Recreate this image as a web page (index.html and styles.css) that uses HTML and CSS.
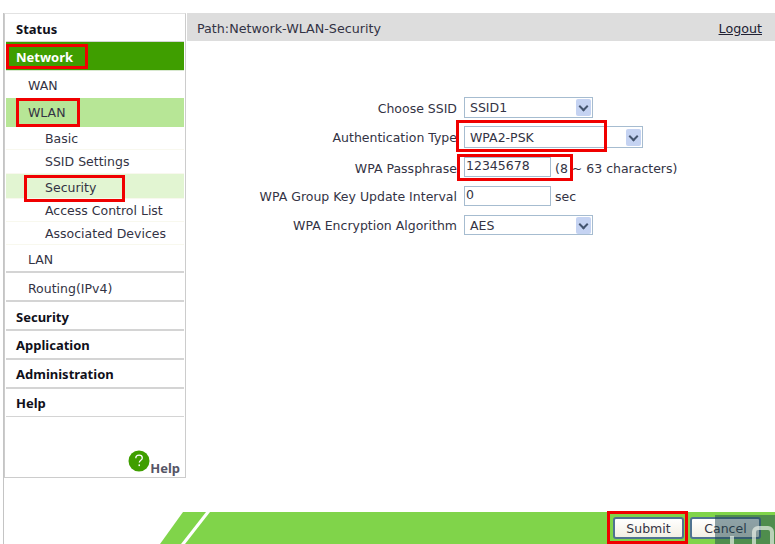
FILE: index.html
```html
<!DOCTYPE html>
<html lang="en">
<head>
    <meta charset="UTF-8">
    <meta name="viewport" content="width=device-width, initial-scale=1.0">
    <title>Network - WLAN - Security</title>
    <link rel="stylesheet" href="styles.css">
</head>
<body>
    <div class="page">
        <div class="top">
            <div class="sidebar">
                <ul class="menu">
                    <li class="item level1 first">Status</li>
                    <li class="item level1 active">Network</li>
                    <li class="item level2">WAN</li>
                    <li class="item level2 current">WLAN</li>
                    <li class="item level3">Basic</li>
                    <li class="item level3 second">SSID Settings</li>
                    <li class="item level3 selected">Security</li>
                    <li class="item level3">Access Control List</li>
                    <li class="item level3">Associated Devices</li>
                    <li class="item level2 lined lan">LAN</li>
                    <li class="item level2 lined routing">Routing(IPv4)</li>
                    <li class="item level1 security">Security</li>
                    <li class="item level1">Application</li>
                    <li class="item level1">Administration</li>
                    <li class="item level1 last">Help</li>
                </ul>
                <div class="help-link">
                    <svg class="help-icon" width="22" height="22" viewBox="0 0 22 22">
                        <circle cx="11" cy="11" r="10.5" fill="#3f9e00"/>
                        <path d="M7.8 8.2c0-2 1.4-3.1 3.3-3.1s3.2 1.1 3.2 2.8c0 2.4-3 2.3-3 4.7" fill="none" stroke="#fff" stroke-width="1.3"/>
                        <rect x="10.5" y="14.4" width="1.5" height="1.7" fill="#fff"/>
                    </svg>
                    <span>Help</span>
                </div>
            </div>
            <div class="content">
                <div class="pathbar">
                    <span>Path:Network-WLAN-Security</span>
                    <a class="logout" href="#">Logout</a>
                </div>
                <div class="form">
                    <div class="row row-ssid">
                        <label>Choose SSID</label>
                        <div class="fake-select short"><span>SSID1</span><i class="arrow"></i></div>
                    </div>
                    <div class="row row-auth">
                        <label>Authentication Type</label>
                        <div class="fake-select long"><span>WPA2-PSK</span><i class="arrow"></i></div>
                    </div>
                    <div class="row row-pass">
                        <label>WPA Passphrase</label>
                        <div class="field">12345678</div>
                        <span class="note">(8 ~ 63 characters)</span>
                    </div>
                    <div class="row row-interval">
                        <label>WPA Group Key Update Interval</label>
                        <div class="field">0</div>
                        <span class="note">sec</span>
                    </div>
                    <div class="row row-algo">
                        <label>WPA Encryption Algorithm</label>
                        <div class="fake-select short"><span>AES</span><i class="arrow"></i></div>
                    </div>
                </div>
            </div>
        </div>
        <div class="footer">
            <svg class="footer-bg" width="615" height="32" viewBox="0 0 615 32">
                <polygon points="23,0 46,0 21,32 0,32" fill="#80d44a"/>
                <polygon points="50,0 615,0 615,32 25,32" fill="#80d44a"/>
            </svg>
            <div class="buttons">
                <button class="btn" type="button">Submit</button>
                <button class="btn" type="button">Cancel</button>
            </div>
        </div>
    </div>

    <!-- red marks drawn over the screenshot -->
    <div class="mark mark-network"></div>
    <div class="mark mark-wlan"></div>
    <div class="mark mark-security"></div>
    <div class="mark mark-auth"></div>
    <div class="mark mark-pass"></div>
    <div class="mark mark-submit"></div>

    <div class="watermark">
        <svg width="60" height="29" viewBox="0 0 60 29">
            <path d="M39 29V17a4 4 0 0 1 4-4h10a4 4 0 0 1 4 4v12M17 29v-8" fill="none" stroke="#e8efe6" stroke-width="4" opacity="0.7"/>
        </svg>
    </div>
</body>
</html>
```

FILE: styles.css
```css
html, body {
    margin: 0;
    padding: 0;
}
body {
    width: 775px;
    height: 544px;
    overflow: hidden;
    position: relative;
    background-color: white;
    font-family: "DejaVu Sans", sans-serif;
    font-size: 12.5px;
    color: #333344;
}
.page {
    height: 531px;
    margin: 13px 0 0 3px;
    border-left: 1px solid #c4c4c4;
    display: flex;
    flex-direction: column;
}
.top {
    display: flex;
}
.sidebar {
    width: 182px;
    height: 465px;
    box-sizing: border-box;
    border: 1px solid #cccccc;
    border-top: 1px solid #e2e2e2;
    padding: 0 1px;
    display: flex;
    flex-direction: column;
}
.menu {
    list-style: none;
    margin: 0;
    padding: 0;
}
.item {
    box-sizing: border-box;
    height: 29px;
    line-height: 29px;
    padding-left: 10px;
    border-bottom: 2px solid #d4d4d4;
}
.level1 {
    font-family: "Noto Sans", sans-serif;
    font-size: 13px;
    font-weight: bold;
    color: #10101a;
}
.first {
    height: 28px;
    line-height: 30px;
    border-bottom-width: 1px;
}
.last {
    height: 28px;
    border-bottom-width: 1px;
}
.security {
    line-height: 30px;
}
.active {
    background-color: #3f9e00;
    color: white;
    line-height: 30px;
    border-bottom: 1px solid #d8e8d0;
}
.level2 {
    padding-left: 22px;
    border-bottom: 0;
    height: 27px;
    line-height: 29px;
}
.lined {
    border-bottom: 2px solid #d4d4d4;
    height: 29px;
}
.lan {
    height: 28px;
}
.routing {
    line-height: 31px;
}
.current {
    background-color: #b7e696;
    height: 29px;
    line-height: 30px;
}
.level3 {
    padding-left: 39px;
    height: 23px;
    line-height: 23px;
    border-bottom: 1px solid #f8f8ee;
}
.second {
    height: 24px;
}
.selected {
    background-color: #e2f5d2;
    height: 25px;
    line-height: 27px;
}
.help-link {
    margin-top: auto;
    display: flex;
    justify-content: flex-end;
    align-items: flex-end;
    padding: 0 4px 0 0;
    font-family: "Noto Sans", sans-serif;
    font-size: 13px;
    font-weight: bold;
    color: #555566;
}
.help-icon {
    margin-bottom: 5px;
}
.content {
    flex: 1;
}
.pathbar {
    height: 28px;
    margin-left: 1px;
    background-color: #dddddd;
    display: flex;
    justify-content: space-between;
    align-items: center;
    padding: 3px 13px 0 10px;
    box-sizing: border-box;
    font-size: 12.7px;
}
.logout {
    color: #222233;
}
.form {
    padding-top: 56px;
}
.row {
    display: flex;
    align-items: center;
}
.row label {
    width: 271px;
    text-align: right;
    margin-right: 7px;
}
.row-ssid {
    height: 21px;
    margin-bottom: 8px;
}
.row-ssid label {
    padding-top: 2px;
}
.row-auth {
    height: 22px;
    margin-bottom: 9px;
}
.row-pass,
.row-interval {
    height: 20px;
    margin-bottom: 9px;
}
.row-pass label,
.row-pass .note {
    padding-top: 2px;
}
.row-algo {
    height: 20px;
}
.fake-select {
    box-sizing: border-box;
    height: 100%;
    border: 1px solid #a6bcd0;
    display: flex;
    justify-content: space-between;
    align-items: center;
    padding: 0 1px 0 5px;
    background-color: white;
}
.short {
    width: 129px;
}
.long {
    width: 179px;
}
.arrow {
    width: 15px;
    height: 17px;
    background-color: #c5d3f2;
    border-radius: 2px;
    position: relative;
}
.arrow::after {
    content: "";
    position: absolute;
    left: 4px;
    top: 4px;
    width: 7px;
    height: 7px;
    border-right: 2px solid #44556f;
    border-bottom: 2px solid #44556f;
    box-sizing: border-box;
    transform: rotate(45deg);
}
.field {
    box-sizing: border-box;
    width: 87px;
    height: 100%;
    border: 1px solid #a6bcd0;
    line-height: 15px;
    padding-left: 1px;
}
.note {
    margin-left: 4px;
}
.footer {
    margin-top: auto;
    height: 32px;
    position: relative;
    display: flex;
    justify-content: flex-end;
    align-items: center;
}
.footer-bg {
    position: absolute;
    right: 0;
    top: 0;
}
.buttons {
    position: relative;
    display: flex;
    gap: 6px;
    margin-right: 14px;
}
.btn {
    width: 71px;
    height: 22px;
    padding: 0;
    box-sizing: border-box;
    border: 2px solid #4f7391;
    border-radius: 3px;
    background: linear-gradient(#ffffff, #f2efe4);
    font: inherit;
    color: #333344;
}
.mark {
    position: absolute;
    box-sizing: border-box;
    border: 3px solid #f00000;
}
.mark-network {
    left: 6px;
    top: 44px;
    width: 82px;
    height: 25px;
}
.mark-wlan {
    left: 16px;
    top: 98px;
    width: 64px;
    height: 29px;
}
.mark-security {
    left: 24px;
    top: 175px;
    width: 101px;
    height: 27px;
}
.mark-auth {
    left: 456px;
    top: 120px;
    width: 151px;
    height: 32px;
}
.mark-pass {
    left: 457px;
    top: 154px;
    width: 116px;
    height: 27px;
}
.mark-submit {
    left: 607px;
    top: 511px;
    width: 81px;
    height: 33px;
}
.watermark {
    position: absolute;
    left: 715px;
    top: 515px;
    width: 60px;
    height: 29px;
    background-color: rgba(30, 70, 80, 0.5);
}
```
